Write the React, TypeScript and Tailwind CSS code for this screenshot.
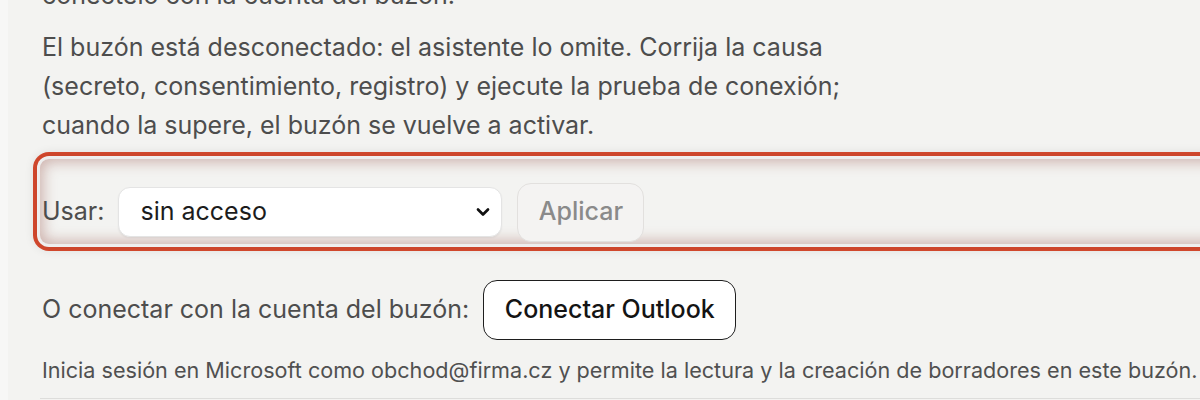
import { ChevronDown } from "lucide-react";

export default function App() {
  return (
    <div
      className="w-[1200px] h-[400px] overflow-hidden bg-[#f7f7f6] flex"
      style={{ fontFamily: "Inter, 'Noto Sans', sans-serif" }}
    >
      <div className="w-[8px] shrink-0" />
      <div className="flex-1 min-w-0 bg-[#f3f3f1] pl-[34px]">
        <div className="w-[1230px]">
          <p className="-mt-[24px] text-[25px] leading-[39px] text-[#4d4d4d]">
            conectelo con la cuenta del buzón.
          </p>
          <p className="mt-[13px] max-w-[860px] text-[25px] leading-[39px] text-[#4d4d4d]">
            El buzón está desconectado: el asistente lo omite. Corrija la causa
            (secreto, consentimiento, registro) y ejecute la prueba de conexión;
            cuando la supere, el buzón se vuelve a activar.
          </p>

          {/* resaltado del selector de acceso */}
          <div className="mt-[13.5px] -ml-[2px] pl-[2px] h-[85px] pt-[24px] rounded-[9px] bg-[#f3f3f1] shadow-[0_0_10px_7px_rgba(0,0,0,0.08),0_0_0_3px_#ffffff,0_0_0_7px_#d94a2e,inset_0_0_14px_3px_rgba(150,80,70,0.4)]">
            <div className="flex items-center h-[59px]">
              <span className="text-[25px] text-[#4d4d4d]">Usar:</span>
              <div className="ml-[14px] w-[384px] h-[50px] rounded-[12px] border border-[#e4e4e4] bg-white flex items-center pl-[21px] pr-[8px] shadow-[0_1px_2px_rgba(0,0,0,0.06)]">
                <span className="flex-1 text-[25px] text-[#1c1c1c]">sin acceso</span>
                <ChevronDown size={20} strokeWidth={3.2} className="text-[#111]" />
              </div>
              <button className="ml-[15px] w-[127px] h-[59px] rounded-[14px] border border-[#e2e0de] bg-[#f4f3f2] text-[25px] font-medium text-[#8a8a8a]">
                Aplicar
              </button>
            </div>
          </div>

          <div className="mt-[36px] flex items-center h-[60px]">
            <span className="text-[25px] text-[#4d4d4d]">O conectar con la cuenta del buzón:</span>
            <button className="ml-[14px] w-[253px] h-[60px] rounded-[14px] border-[1.5px] border-[#1e1e1e] bg-white text-[25px] font-medium text-[#141414]">
              Conectar Outlook
            </button>
          </div>

          <p className="mt-[15px] text-[21.6px] leading-[31px] text-[#505050]">
            Inicia sesión en Microsoft como obchod@firma.cz y permite la lectura y la creación de borradores en este buzón.
          </p>
          <div className="mt-[12px] -ml-[2px] border-t border-[#dddddb] h-[20px]" />
        </div>
      </div>
    </div>
  );
}
